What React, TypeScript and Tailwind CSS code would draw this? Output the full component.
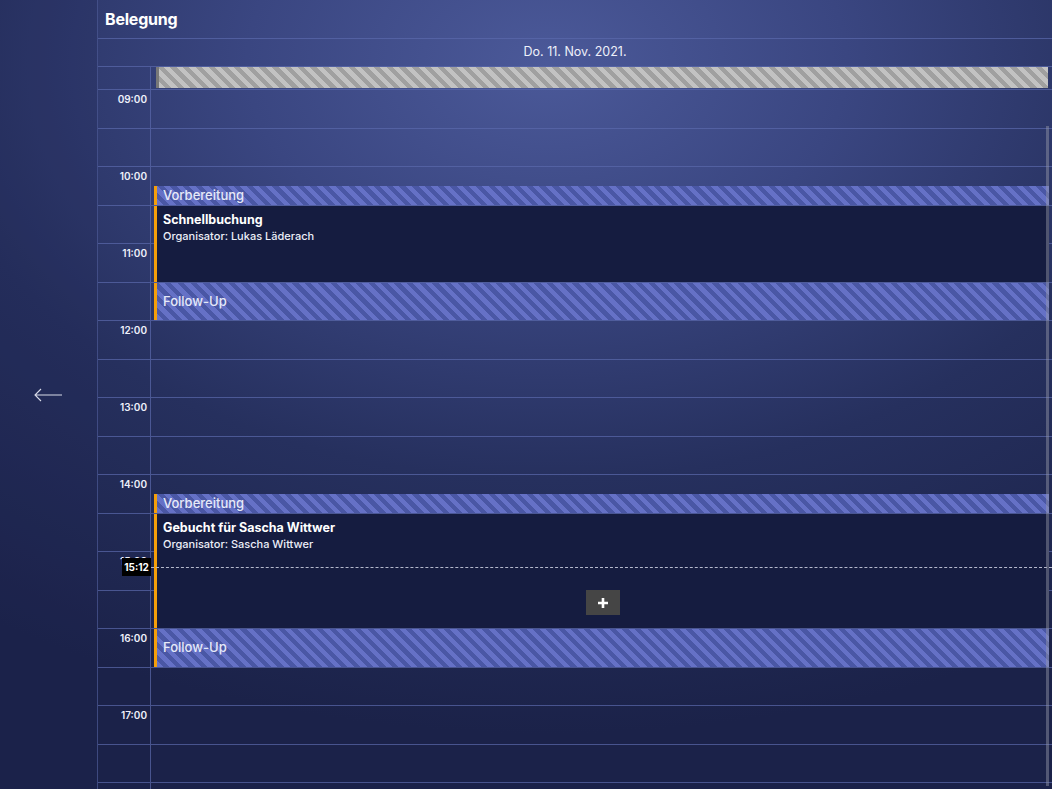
import React from 'react';

const SLOT = 38.5;
const HOUR = 77;
const hours = ['09:00', '10:00', '11:00', '12:00', '13:00', '14:00', '15:00', '16:00', '17:00', ''];

const stripeBlue = 'bg-[repeating-linear-gradient(45deg,#6571c6_0px,#6571c6_4.5px,#4a57a5_4.5px,#4a57a5_9px)]';

type Ev = { start: number; end: number; kind: 'stripe' | 'main'; title: string; org?: string; plus?: boolean };

// start/end in hours after 09:00
const events: Ev[] = [
  { start: 1.25, end: 1.5, kind: 'stripe', title: 'Vorbereitung' },
  { start: 1.5, end: 2.5, kind: 'main', title: 'Schnellbuchung', org: 'Organisator: Lukas Läderach' },
  { start: 2.5, end: 3, kind: 'stripe', title: 'Follow-Up' },
  { start: 5.25, end: 5.5, kind: 'stripe', title: 'Vorbereitung' },
  { start: 5.5, end: 7, kind: 'main', title: 'Gebucht für Sascha Wittwer', org: 'Organisator: Sascha Wittwer', plus: true },
  { start: 7, end: 7.5, kind: 'stripe', title: 'Follow-Up' },
];

const Event = ({ ev }: { ev: Ev }) => {
  const top = ev.start * HOUR;
  const height = (ev.end - ev.start) * HOUR - 1;
  if (ev.kind === 'stripe') {
    return (
      <div
        className={`absolute left-[3px] right-[3px] flex items-center border-l-[3px] border-[#f59f0a] pl-[6px] text-[13px] font-medium text-[#e6e9f8] ${stripeBlue}`}
        style={{ top, height }}
      >
        {ev.title}
      </div>
    );
  }
  return (
    <div
      className="absolute left-[3px] right-[3px] border-l-[3px] border-[#f59f0a] bg-[#151c40] pl-[6px] pt-[6px] text-white"
      style={{ top, height }}
    >
      <div className="text-[12.5px] font-bold leading-[16px]">{ev.title}</div>
      <div className="text-[11px] font-medium leading-[16px] text-[#eceef8]">{ev.org}</div>
      {ev.plus && (
        <div className="absolute bottom-[13px] left-[429px] flex h-[25px] w-[34px] items-center justify-center bg-[#454545]">
          <svg width="12" height="12" viewBox="0 0 12 12">
            <path d="M6 1v10M1 6h10" stroke="white" strokeWidth="2.6" />
          </svg>
        </div>
      )}
    </div>
  );
};

const App = () => {
  const slots = Array.from({ length: 20 });
  return (
    <div
      className="flex h-[789px] w-[1052px] overflow-hidden bg-[radial-gradient(ellipse_95%_85%_at_52%_8%,#4b5999_0%,#3a4681_30%,#26305e_62%,#1b2249_100%)] font-['Inter',sans-serif] text-white"
    >
      <div className="flex w-[98px] shrink-0 items-center justify-center border-r border-[#4d5a96]/70 bg-[#1d2350]/20">
        <svg width="30" height="16" viewBox="0 0 30 16" className="ml-[-1px]">
          <path d="M2 8h27M8 2L2 8l6 6" stroke="#d8dbe8" strokeWidth="1.1" fill="none" />
        </svg>
      </div>
      <div className="relative flex flex-1 flex-col">
        <div className="flex h-[39px] shrink-0 items-center border-b border-[#5b69ac]/70 pl-[7px] text-[16px] font-bold tracking-[-0.2px]">
          Belegung
        </div>
        <div className="flex h-[28px] shrink-0 items-center justify-center border-b border-[#5b69ac]/70 text-[12.5px] text-[#eef0fa]">
          Do. 11. Nov. 2021.
        </div>
        <div className="flex h-[23px] shrink-0 border-b border-[#5b69ac]/70">
          <div className="w-[53px] shrink-0 border-r border-[#5b69ac]/70" />
          <div className="flex-1 pl-[5px] pr-[4px]">
            <div className="h-[21px] border-l-[3px] border-[#787878] bg-[repeating-linear-gradient(45deg,#c2c2c2_0px,#c2c2c2_4.5px,#a0a0a0_4.5px,#a0a0a0_9px)]" />
          </div>
        </div>
        <div className="relative flex flex-1">
          <div className="w-[53px] shrink-0 border-r border-[#5b69ac]/70">
            {slots.map((_, i) => (
              <div
                key={i}
                className="border-b border-[#5b69ac]/70 pr-[3px] pt-[2px] text-right text-[10px] font-semibold text-[#eef0fa]"
                style={{ height: SLOT }}
              >
                {i % 2 === 0 ? hours[i / 2] : ''}
              </div>
            ))}
          </div>
          <div className="relative flex-1">
            {slots.map((_, i) => (
              <div key={i} className="border-b border-[#5b69ac]/70" style={{ height: SLOT }} />
            ))}
            {events.map((ev, i) => (
              <Event key={i} ev={ev} />
            ))}
            <div
              className="absolute left-0 right-0 border-t border-dashed border-[#b4b8cc]"
              style={{ top: 6.2 * HOUR - 0.5 }}
            />
            <div className="absolute right-[3px] top-[36px] h-[660px] w-[3px] bg-[#9a9cab]/45" />
          </div>
          <div
            className="absolute left-[24px] flex h-[18px] w-[29px] items-center justify-center bg-black text-[10px] font-bold text-white"
            style={{ top: 6.2 * HOUR - 9 }}
          >
            15:12
          </div>
        </div>
      </div>
    </div>
  );
};

export default App;
